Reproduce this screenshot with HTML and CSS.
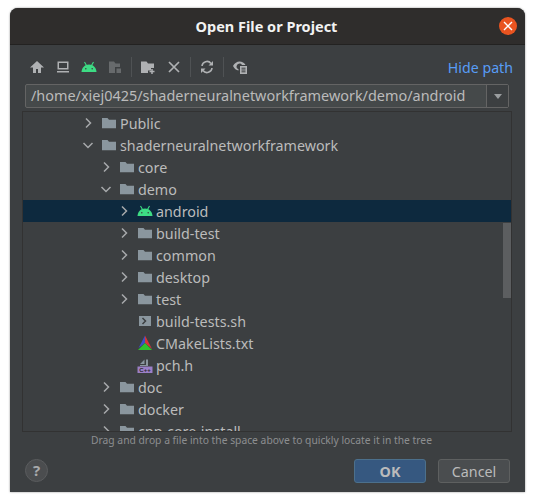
FILE: index.html
```html
<!DOCTYPE html>
<html lang="en">
<head>
  <meta charset="UTF-8">
  <title>Open File or Project</title>
  <link rel="stylesheet" href="styles.css">
</head>
<body>
  <svg class="defs" width="0" height="0">
    <symbol id="folder" viewBox="0 0 16 16"><path d="M1 3h5.500L8 4.700h7V13.300H1z" fill="#8a969e"/></symbol>
    <symbol id="closed" viewBox="0 0 16 16"><path d="M6 3.500 10.500 8 6 12.500" fill="none" stroke="#a7a9ab" stroke-width="1.500"/></symbol>
    <symbol id="open" viewBox="0 0 16 16"><path d="M3.500 6 8 10.500 12.500 6" fill="none" stroke="#a7a9ab" stroke-width="1.500"/></symbol>
    <symbol id="android" viewBox="0 0 16 16"><path d="M0.500 13C0.800 8.800 3.600 5.500 8 5.500s7.200 3.300 7.500 7.500z" fill="#3ddc84"/><path d="M3.500 3 5.500 6.500M12.500 3l-2 3.500" stroke="#3ddc84" stroke-width="1.100"/><circle cx="4.800" cy="9.800" r=".8" fill="#3c3f41"/><circle cx="11.200" cy="9.800" r=".8" fill="#3c3f41"/></symbol>
  </svg>

  <div class="window">
    <header class="titlebar">
      <h1>Open File or Project</h1>
      <span class="close">
        <svg width="10" height="10" viewBox="0 0 10 10"><path d="M1 1l8 8M9 1l-8 8" stroke="#fff" stroke-width="1.400"/></svg>
      </span>
    </header>

    <div class="content">
      <div class="toolbar">
        <span class="tool"><svg width="16" height="16" viewBox="0 0 16 16"><path d="M8 2 1 8.500H4V14h3v-4h2v4h3V8.500h3z" fill="#afb1b3"/></svg></span>
        <span class="tool"><svg width="16" height="16" viewBox="0 0 16 16"><path d="M2.500 2.500h11v8h-11zM4 4v5h8V4zM2 12h12v1.500H2z" fill="#afb1b3" fill-rule="evenodd"/></svg></span>
        <span class="tool"><svg width="16" height="16"><use href="#android"/></svg></span>
        <span class="tool"><svg width="16" height="16" viewBox="0 0 16 16"><path d="M2 2.500h5L8.500 4.500H13V8H8v6H2z" fill="#676a6c"/><path d="M9.500 9.500H14V14H9.500z" fill="#676a6c"/></svg></span>
        <span class="sep"></span>
        <span class="tool"><svg width="16" height="16" viewBox="0 0 16 16"><path d="M1 2.500h5.500L8 4.500h6V9h-3v2.500H8V14H1z" fill="#afb1b3"/><path d="M12 10v5M9.500 12.500h5" stroke="#afb1b3" stroke-width="1.500"/></svg></span>
        <span class="tool"><svg width="16" height="16" viewBox="0 0 16 16"><path d="M3 3l10 10M13 3 3 13" stroke="#afb1b3" stroke-width="1.700"/></svg></span>
        <span class="sep"></span>
        <span class="tool"><svg width="16" height="16" viewBox="0 0 16 16"><path d="M3 7a5 5 0 0 1 9-2.500M13 9a5 5 0 0 1-9 2.500" fill="none" stroke="#afb1b3" stroke-width="1.600"/><path d="M14 2v4.500H9.500zM2 14V9.500h4.500z" fill="#afb1b3"/></svg></span>
        <span class="sep"></span>
        <span class="tool"><svg width="16" height="16" viewBox="0 0 16 16"><path d="M1 7c1.500-3 4-4.500 6.500-4.500S12.500 4 13.500 6H10a3 3 0 0 0-5.500 1.500c0 1.300.8 2.300 2 2.700V11.500C4.300 11.300 2.300 9.700 1 7z" fill="#afb1b3"/><path d="M8 7h7v8H8z" fill="#afb1b3"/><path d="M9.500 9.200h4M9.500 11h4M9.500 12.800h4" stroke="#3c3f41"/></svg></span>
        <a class="hide-path">Hide path</a>
      </div>

      <div class="path-box">
        <span class="path-text">/home/xiej0425/shaderneuralnetworkframework/demo/android</span>
        <span class="path-arrow"></span>
      </div>

      <div class="tree">
        <div class="row d0"><svg class="chev"><use href="#closed"/></svg><svg class="ico"><use href="#folder"/></svg>Public</div>
        <div class="row d0"><svg class="chev"><use href="#open"/></svg><svg class="ico"><use href="#folder"/></svg>shaderneuralnetworkframework</div>
        <div class="row d1"><svg class="chev"><use href="#closed"/></svg><svg class="ico"><use href="#folder"/></svg>core</div>
        <div class="row d1"><svg class="chev"><use href="#open"/></svg><svg class="ico"><use href="#folder"/></svg>demo</div>
        <div class="row d2 selected"><svg class="chev"><use href="#closed"/></svg><svg class="ico"><use href="#android"/></svg>android</div>
        <div class="row d2"><svg class="chev"><use href="#closed"/></svg><svg class="ico"><use href="#folder"/></svg>build-test</div>
        <div class="row d2"><svg class="chev"><use href="#closed"/></svg><svg class="ico"><use href="#folder"/></svg>common</div>
        <div class="row d2"><svg class="chev"><use href="#closed"/></svg><svg class="ico"><use href="#folder"/></svg>desktop</div>
        <div class="row d2"><svg class="chev"><use href="#closed"/></svg><svg class="ico"><use href="#folder"/></svg>test</div>
        <div class="row d2"><span class="chev"></span><svg class="ico" viewBox="0 0 16 16"><path d="M2 3h12v10H2z" fill="#8a969e"/><path d="M5.500 5 8.500 8 5.500 11" fill="none" stroke="#3c3f41" stroke-width="1.500"/></svg>build-tests.sh</div>
        <div class="row d2"><span class="chev"></span><svg class="ico" viewBox="0 0 16 16"><path d="M8 0.500 1.500 13 8 8z" fill="#3f4fc4"/><path d="M8 0.500 15 14 8 8z" fill="#d8343a"/><path d="M8 8 1 15h14z" fill="#2fc02f"/></svg>CMakeLists.txt</div>
        <div class="row d2"><span class="chev"></span><svg class="ico" viewBox="0 0 16 16"><path d="M3 7 7.500 2.500V7zM3 8h6V2.500h2V9H3z" fill="#8a969e"/><path d="M0.500 9.500h15v6.500H0.500z" fill="#9b7fc7"/><text class="cpp" x="8" y="14.800" text-anchor="middle">C++</text></svg>pch.h</div>
        <div class="row d1"><svg class="chev"><use href="#closed"/></svg><svg class="ico"><use href="#folder"/></svg>doc</div>
        <div class="row d1"><svg class="chev"><use href="#closed"/></svg><svg class="ico"><use href="#folder"/></svg>docker</div>
        <div class="row d1"><svg class="chev"><use href="#closed"/></svg><svg class="ico"><use href="#folder"/></svg>cpp-core-install</div>
        <div class="scrollbar"></div>
      </div>

      <p class="hint">Drag and drop a file into the space above to quickly locate it in the tree</p>

      <footer class="actions">
        <span class="help">?</span>
        <button class="btn primary" type="button">OK</button>
        <button class="btn" type="button">Cancel</button>
      </footer>
    </div>
  </div>
</body>
</html>
```

FILE: styles.css
```css
* {
  box-sizing: border-box;
  margin: 0;
  padding: 0;
}

body {
  width: 535px;
  height: 502px;
  padding: 8px 10px 10px;
  background: #fff;
  font-family: "Noto Sans", sans-serif;
  color: #bbbbbb;
  overflow: hidden;
}

.defs {
  display: block;
  height: 0;
}

.window {
  height: 484px;
  display: flex;
  flex-direction: column;
  border-radius: 8px 8px 0 0;
  background: #3c3f41;
  box-shadow: 0 0 2px rgba(0, 0, 0, 0.5);
  overflow: hidden;
}

.titlebar {
  height: 37px;
  flex: none;
  display: flex;
  align-items: center;
  justify-content: center;
  position: relative;
  background: #2f2d2c;
  border-bottom: 1px solid #232221;
}

.titlebar h1 {
  font-size: 14.5px;
  font-weight: 700;
  color: #f2f2f2;
  padding-right: 2px;
}

.close {
  position: absolute;
  right: 8px;
  top: 9px;
  width: 18px;
  height: 18px;
  border-radius: 50%;
  background: #e95420;
  display: flex;
  align-items: center;
  justify-content: center;
}

.content {
  flex: 1;
  display: flex;
  flex-direction: column;
  padding: 0 13px 0 12px;
}

.toolbar {
  height: 39px;
  flex: none;
  padding: 5px 0 0 2px;
  display: flex;
  align-items: center;
  margin-right: -1px;
}

.tool {
  width: 26px;
  height: 20px;
  display: flex;
  align-items: center;
  justify-content: center;
}

.sep {
  width: 1px;
  height: 20px;
  margin: 0 3px;
  background: #4f5254;
}

.hide-path {
  margin-left: auto;
  font-size: 14.2px;
  color: #589df6;
}

.path-box {
  height: 24px;
  flex: none;
  margin: 0 3px;
  display: flex;
  background: #45494a;
  border: 1px solid #646464;
  border-radius: 2px;
}

.path-text {
  flex: 1;
  padding-left: 5px;
  font-size: 14.43px;
  line-height: 21px;
  white-space: nowrap;
}

.path-arrow {
  width: 22px;
  flex: none;
  background: #3c3f41;
  border-left: 1px solid #646464;
  position: relative;
}

.path-arrow::after {
  content: "";
  position: absolute;
  left: 7px;
  top: 9px;
  border-left: 4px solid transparent;
  border-right: 4px solid transparent;
  border-top: 5px solid #9a9d9f;
}

.tree {
  height: 321px;
  flex: none;
  margin-top: 3px;
  position: relative;
  border: 1px solid #323232;
  overflow: hidden;
}

.row {
  height: 22px;
  display: flex;
  align-items: center;
  font-size: 14.3px;
  white-space: nowrap;
}

.d0 { padding-left: 57px; }
.d1 { padding-left: 75px; }
.d2 { padding-left: 93px; }

.selected {
  background: #0d293e;
}

.chev {
  width: 16px;
  height: 16px;
  flex: none;
  margin-right: 5px;
}

.ico {
  width: 16px;
  height: 16px;
  flex: none;
  margin-right: 3px;
}

.cpp {
  font-family: "Liberation Sans", sans-serif;
  font-size: 6px;
  font-weight: 700;
  fill: #2b2b2b;
}

.scrollbar {
  position: absolute;
  right: 0;
  top: 111px;
  width: 8px;
  height: 75px;
  background: #5c5e60;
}

.hint {
  height: 17px;
  flex: none;
  padding-right: 11px;
  text-align: center;
  font-size: 10.3px;
  line-height: 17px;
  color: #8c8e90;
}

.actions {
  flex: 1;
  display: flex;
  align-items: flex-start;
  padding-top: 10px;
  padding-right: 2px;
  gap: 12px;
}

.help {
  width: 23px;
  height: 23px;
  margin-left: 3px;
  margin-right: auto;
  border-radius: 50%;
  background: #4b4d4f;
  border: 1px solid #5a5c5e;
  text-align: center;
  font-size: 15px;
  font-weight: 700;
  line-height: 20px;
  color: #a8aaac;
}

.btn {
  width: 72px;
  height: 24px;
  font-family: inherit;
  font-size: 14.3px;
  color: #bbbbbb;
  background: #4a4d4f;
  border: 1px solid #5e6060;
  border-radius: 3px;
}

.primary {
  font-weight: 700;
  background: #365880;
  border-color: #4c708c;
}
```
